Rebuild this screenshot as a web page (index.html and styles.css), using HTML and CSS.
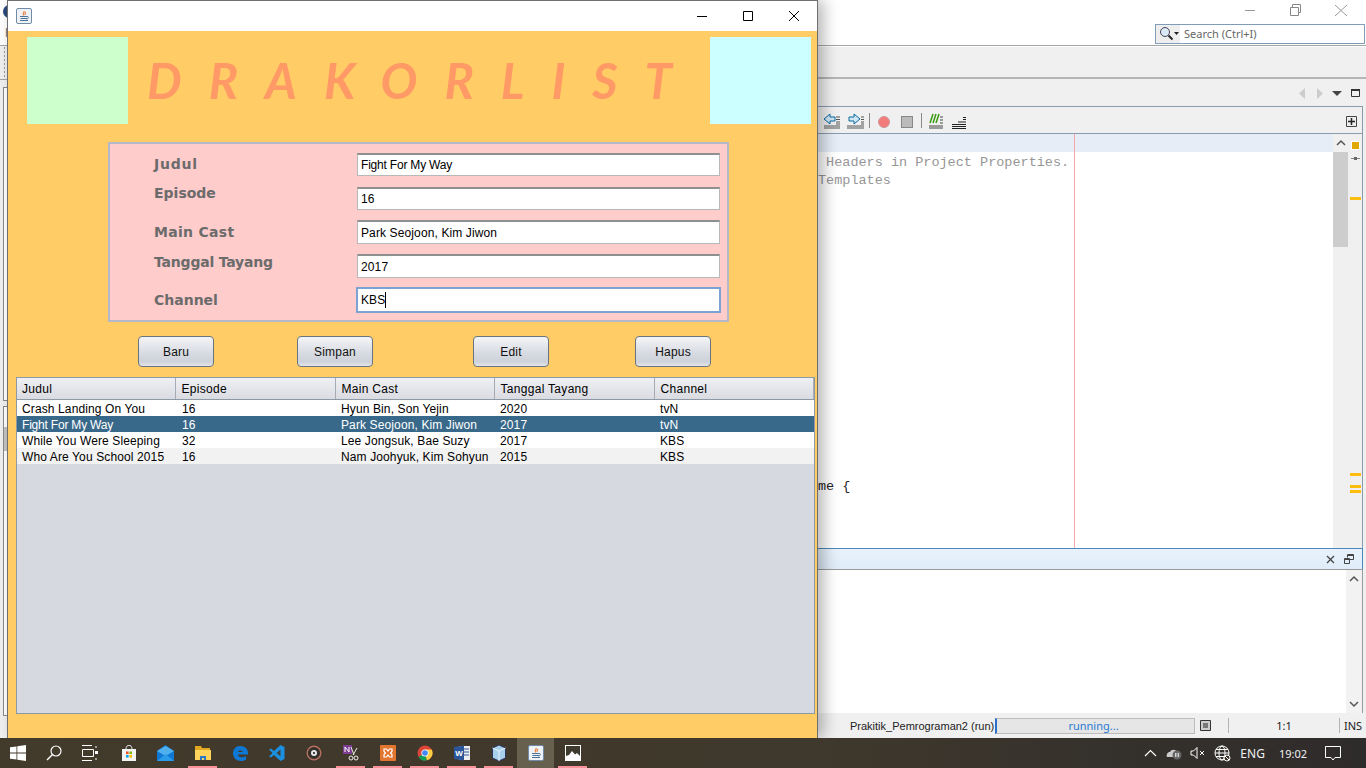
FILE: index.html
```html
<!DOCTYPE html>
<html lang="en">
<head>
  <meta charset="UTF-8">
  <title>Drakorlist</title>
  <link rel="stylesheet" href="styles.css">
</head>
<body>
  <!-- IDE window behind the app -->
  <div class="ide">
    <div class="ide-left">
      <div class="ide-left-top"><span class="ide-logo"></span><span class="ide-menu-f">F</span></div>
      <div class="ide-left-grip"></div>
      <div class="ide-left-body">
        <div class="side-panel panel-projects"></div>
        <div class="side-panel panel-nav"><div class="side-tab"></div></div>
      </div>
    </div>
    <div class="ide-main">
      <div class="ide-title">
        <div class="win-controls">
          <svg width="14" height="14" viewBox="0 0 14 14"><path d="M1 7.500h10" stroke="#999" fill="none"/></svg>
          <svg width="14" height="14" viewBox="0 0 14 14"><path d="M1.500 4.500h8v8h-8zM3.500 4.500v-3h8v8h-2" stroke="#888" fill="none"/></svg>
          <svg width="14" height="14" viewBox="0 0 14 14"><path d="M1 2l12 11M13 2L1 13" stroke="#999" fill="none"/></svg>
        </div>
      </div>
      <div class="ide-menu">
        <div class="search-box">
          <span class="search-icon">
            <svg width="20" height="16" viewBox="0 0 20 16"><circle cx="6" cy="6" r="4.500" fill="#dbe8f5" stroke="#445"/><path d="M9.500 9.500l4 4" stroke="#222" stroke-width="2"/><path d="M15 6h5l-2.500 3z" fill="#222"/></svg>
          </span>
          <span class="search-text">Search (Ctrl+I)</span>
        </div>
      </div>
      <div class="ide-toolbar"></div>
      <div class="ide-tabs">
        <svg width="64" height="14" viewBox="0 0 64 14"><path d="M7 2v11L1 7.500z" fill="#ccc"/><path d="M19 2v11l6-5.500z" fill="#ccc"/><path d="M34 5h10l-5 5z" fill="#444"/><path d="M53.500 3.500h8v7h-8z" fill="none" stroke="#333"/><path d="M53 4h9" stroke="#333" stroke-width="2"/></svg>
      </div>
      <div class="editor">
        <div class="editor-tools">
          <svg width="150" height="20" viewBox="0 0 150 20">
            <path d="M6 8l6-5v3h5v4h-5v3z" fill="#cfe6f5" stroke="#0a6aa1"/>
            <path d="M6 15h16M6 17h16M18 6h4M18 8.500h4M18 11h4M18 13h4" stroke="#555"/>
            <path d="M42 8l-6-5v3h-5v4h5v3z" fill="#cfe6f5" stroke="#0a6aa1"/>
            <path d="M29 15h17M29 17h17M43 6h3M43 8.500h3M43 11h3M43 13h3" stroke="#555"/>
            <path d="M51.500 2v15M103.500 2v15" stroke="#888"/>
            <circle cx="66" cy="11" r="5.500" fill="#f27c7c" stroke="#c99"/>
            <rect x="83.500" y="5.500" width="11" height="11" fill="#bbb" stroke="#888"/>
            <path d="M112 12l3-9M115 12l3-9M118 12l3-9" stroke="#3a9a10" stroke-width="1.500"/>
            <path d="M111 15h14M111 17h14M122 6h3M122 9h3M122 12h3" stroke="#444"/>
            <path d="M134 17.500h14M134 15.500h14M134 13.500h14M140 11h8M145 8.500h3M145 6.500h3" fill="none" stroke="#222"/>
          </svg>
          <svg class="split-icon" width="11" height="11" viewBox="0 0 11 11"><path d="M.5.500h10v10H.5z" fill="#eee" stroke="#444"/><path d="M5.500 2v7M2 5.500h7" stroke="#222" stroke-width="1.500"/></svg>
        </div>
        <div class="editor-body">
          <div class="line-hi"></div>
          <pre class="code-line code-comment"> Headers in Project Properties.</pre>
          <pre class="code-line code-comment">Templates</pre>
          <pre class="code-line code-class">me {</pre>
          <div class="margin-line"></div>
          <div class="scroll-strip">
            <div class="scroll-arrows"><svg width="10" height="8" viewBox="0 0 10 8"><path d="M1 6l4-4 4 4" fill="none" stroke="#555" stroke-width="1.500"/></svg></div>
            <div class="scroll-thumb"></div>
          </div>
          <div class="error-strip">
            <i class="mark-square"></i>
            <svg class="mark-caret" width="9" height="5" viewBox="0 0 9 5"><path d="M0 2.500h9" stroke="#888"/><path d="M3 1h3v3H3z" fill="#666"/></svg>
            <i class="mark m1"></i><i class="mark m2"></i><i class="mark m3"></i><i class="mark m4"></i>
          </div>
        </div>
      </div>
      <div class="output-head">
        <svg width="9" height="9" viewBox="0 0 9 9"><path d="M1 1l7 7M8 1L1 8" stroke="#444" stroke-width="1.300"/></svg>
        <svg width="10" height="10" viewBox="0 0 10 10"><path d="M.5 4.500h5v5h-5zM3.500 3.500v-3h6v5H6M.5 5.500h5M3.500 1.500h6" fill="none" stroke="#444"/></svg>
      </div>
      <div class="output-body">
        <div class="output-scroll">
          <svg width="10" height="8" viewBox="0 0 10 8"><path d="M1 6l4-4 4 4" fill="none" stroke="#555" stroke-width="1.500"/></svg>
          <svg width="10" height="8" viewBox="0 0 10 8"><path d="M1 2l4 4 4-4" fill="none" stroke="#555" stroke-width="1.500"/></svg>
        </div>
      </div>
      <div class="statusbar">
        <span class="run-name">Prakitik_Pemrograman2 (run)</span>
        <span class="run-bar">running...</span>
        <svg class="run-stop" width="11" height="11" viewBox="0 0 11 11"><path d="M.5.500h10v10H.5z" fill="#ccc" stroke="#333"/><path d="M3 3h5v5H3z" fill="#777"/></svg>
        <span class="status-pos">1:1</span>
        <span class="status-ins">INS</span>
      </div>
    </div>
  </div>

  <!-- Java Swing app window -->
  <div class="app-window">
    <div class="app-title">
      <svg class="java-icon" width="16" height="16" viewBox="0 0 16 16"><rect x=".5" y=".5" width="15" height="15" rx="1.500" fill="#eef2f7" stroke="#6f8ba8"/><path d="M8 3c1 1.500-2 2.500-.5 4.500M9.500 4c.5 1-1 2-.3 3" fill="none" stroke="#e8762b" stroke-width="1.100"/><path d="M4 8.500h7M4.500 10.500h6.500M4 12.500h8M11 8.500c2 0 2 2-.5 2.500" fill="none" stroke="#4a7299"/></svg>
      <div class="app-controls">
        <svg width="12" height="12" viewBox="0 0 12 12"><path d="M1 6.500h10" stroke="#000"/></svg>
        <svg width="12" height="12" viewBox="0 0 12 12"><path d="M1.500 1.500h9v9h-9z" fill="none" stroke="#000"/></svg>
        <svg width="12" height="12" viewBox="0 0 12 12"><path d="M1 1l10 10M11 1L1 11" stroke="#000"/></svg>
      </div>
    </div>
    <div class="app-body">
      <div class="banner">
        <div class="banner-box box-green"></div>
        <div class="banner-title">DRAKORLIST</div>
        <div class="banner-box box-cyan"></div>
      </div>
      <div class="form-panel">
        <div class="form-row row-judul">
          <label class="form-label">Judul</label>
          <div class="field">Fight For My Way</div>
        </div>
        <div class="form-row row-episode">
          <label class="form-label">Episode</label>
          <div class="field">16</div>
        </div>
        <div class="form-row row-cast">
          <label class="form-label">Main Cast</label>
          <div class="field">Park Seojoon, Kim Jiwon</div>
        </div>
        <div class="form-row row-tanggal">
          <label class="form-label">Tanggal Tayang</label>
          <div class="field">2017</div>
        </div>
        <div class="form-row row-channel">
          <label class="form-label">Channel</label>
          <div class="field field-focus">KBS<span class="caret"></span></div>
        </div>
      </div>
      <div class="buttons">
        <button class="btn btn-baru">Baru</button>
        <button class="btn btn-simpan">Simpan</button>
        <button class="btn btn-edit">Edit</button>
        <button class="btn btn-hapus">Hapus</button>
      </div>
      <div class="table-wrap">
        <table class="drama-table">
          <thead>
            <tr>
              <th class="col-judul">Judul</th>
              <th class="col-episode">Episode</th>
              <th class="col-cast">Main Cast</th>
              <th class="col-tanggal">Tanggal Tayang</th>
              <th class="col-channel">Channel</th>
            </tr>
          </thead>
          <tbody>
            <tr>
              <td>Crash Landing On You</td><td>16</td><td>Hyun Bin, Son Yejin</td><td>2020</td><td>tvN</td>
            </tr>
            <tr class="row-selected">
              <td class="cell-tight">Fight For My Way</td><td>16</td><td>Park Seojoon, Kim Jiwon</td><td>2017</td><td>tvN</td>
            </tr>
            <tr>
              <td>While You Were Sleeping</td><td>32</td><td>Lee Jongsuk, Bae Suzy</td><td>2017</td><td>KBS</td>
            </tr>
            <tr class="row-alt">
              <td>Who Are You School 2015</td><td>16</td><td>Nam Joohyuk, Kim Sohyun</td><td>2015</td><td>KBS</td>
            </tr>
          </tbody>
        </table>
      </div>
    </div>
  </div>

  <!-- Windows taskbar -->
  <div class="taskbar">
    <svg class="tb-start" width="16" height="16" viewBox="0 0 16 16"><path d="M0 2.300l6.500-.9v6.200H0zM7.300 1.300L16 0v7.600H7.300zM0 8.400h6.500v6.200L0 13.700zM7.300 8.400H16V16l-8.700-1.300z" fill="#fff"/></svg>
    <svg class="tb-search" width="16" height="16" viewBox="0 0 16 16"><circle cx="10" cy="6" r="5" fill="none" stroke="#fff" stroke-width="1.200"/><path d="M6.500 9.500L1 15" stroke="#fff" stroke-width="1.400"/></svg>
    <svg class="tb-task" width="17" height="16" viewBox="0 0 17 16"><path d="M1 .5h10M1 15.500h10M1.500 4.500h11v7h-11z" fill="none" stroke="#fff"/><path d="M15 1v2M15 13v2" stroke="#fff"/><rect x="14" y="6" width="3" height="3" fill="#fff"/></svg>
    <div class="tb-apps">
      <span class="tb-app"><svg width="16" height="16" viewBox="0 0 16 16"><path d="M1 4h14v12H1z" fill="#f4f4f4"/><path d="M5 4c0-5 6-5 6 0" fill="none" stroke="#eee"/><path d="M5 6.500h2.600v2.600H5z" fill="#f25022"/><path d="M8.400 6.500H11v2.600H8.400z" fill="#7fba00"/><path d="M5 10h2.600v2.600H5z" fill="#00a4ef"/><path d="M8.400 10H11v2.600H8.400z" fill="#ffb900"/></svg></span>
      <span class="tb-app"><svg width="17" height="16" viewBox="0 0 17 16"><path d="M0 6l8.500-6L17 6v10H0z" fill="#0f78d4"/><path d="M0 6l8.500 5L17 6 8.500 1z" fill="#50b0ee"/><path d="M0 16l8.500-7 8.500 7z" fill="#2a9be8"/></svg></span>
      <span class="tb-app tb-open"><svg width="16" height="16" viewBox="0 0 16 16"><path d="M0 1h6l1 2h8v3H0z" fill="#e0a820"/><path d="M0 5h16v10H0z" fill="#ffd35c"/><path d="M5 15v-4h6v4H9v-2H7v2z" fill="#2a78c8"/></svg></span>
      <span class="tb-app"><svg width="16" height="16" viewBox="0 0 16 16"><path d="M8 1C3.500 1 1 4.500 1 8.500 1 13 4.500 16 9 16c1.500 0 3-.3 5-1.200V11c-3 2-7.500 2-8-1.500h10V8c0-4-3-7-8-7zM6 7c.3-2 4.500-2 4.700 0z" fill="#0f78d4"/></svg></span>
      <span class="tb-app"><svg width="16" height="16" viewBox="0 0 16 16"><path d="M11.500 0L15.500 2v12l-4 2L5 10l-3 2.500L0 11.500 3.500 8 0 4.500 2 3.500 5 6z" fill="#1b8fe0"/><path d="M11.500 4.500L7.500 8l4 3.500z" fill="#444033"/></svg></span>
      <span class="tb-app"><svg width="16" height="16" viewBox="0 0 16 16"><circle cx="8" cy="8" r="6.800" fill="#332f2a" stroke="#b7705f" stroke-width="1.400"/><circle cx="8" cy="8" r="3" fill="#e8e8e8"/><circle cx="8" cy="8" r="1.100" fill="#222"/></svg></span>
      <span class="tb-app tb-open"><svg width="16" height="16" viewBox="0 0 16 16"><path d="M0 0h9v9H0z" fill="#7b3e93"/><path d="M2 7V2l4 5V2" fill="none" stroke="#fff"/><path d="M8 2l3 8M14 3l-4 7" stroke="#eee"/><circle cx="8" cy="13" r="2" fill="none" stroke="#eee"/><circle cx="13" cy="13" r="2" fill="none" stroke="#eee"/></svg></span>
      <span class="tb-app tb-open"><svg width="16" height="16" viewBox="0 0 16 16"><rect width="16" height="16" rx="1" fill="#e3762f"/><path d="M4 4h2.500L8 6l1.500-2H12v2.500L10.500 8 12 9.500V12H9.500L8 10l-1.500 2H4V9.500L5.500 8 4 6.500z" fill="none" stroke="#fff" stroke-width="1.200"/></svg></span>
      <span class="tb-app tb-open"><svg width="16" height="16" viewBox="0 0 16 16"><circle cx="8" cy="8" r="7.500" fill="#db4437"/><path d="M8 8L1.500 12A7.500 7.500 0 0 0 10 15.300z" fill="#0f9d58"/><path d="M8 4.500h6.700A7.500 7.500 0 0 1 10 15.300L8 8z" fill="#ffcd40"/><circle cx="8" cy="8" r="3.600" fill="#fff"/><circle cx="8" cy="8" r="2.800" fill="#4285f4"/></svg></span>
      <span class="tb-app tb-open"><svg width="16" height="16" viewBox="0 0 16 16"><path d="M5 1h11v14H5z" fill="#eee"/><path d="M10 4h5M10 7h5M10 10h5" stroke="#2b579a"/><path d="M0 2l10-1.500v15L0 14z" fill="#2b579a"/><text class="word-w" x="1.200" y="11">W</text></svg></span>
      <span class="tb-app tb-open"><svg width="16" height="16" viewBox="0 0 16 16"><path d="M8 0l6.500 3v10L8 16l-6.500-3V3z" fill="#a7d0ea" stroke="#2c3560"/><path d="M8 6l6.500-3M8 6L1.500 3M8 6v10" stroke="#e8f3fa" fill="none"/></svg></span>
      <span class="tb-app tb-active"><svg width="16" height="16" viewBox="0 0 16 16"><rect x=".5" y=".5" width="15" height="15" rx="1.500" fill="#eef2f7" stroke="#6f8ba8"/><path d="M8 3c1 1.500-2 2.500-.5 4.500M9.500 4c.5 1-1 2-.3 3" fill="none" stroke="#e8762b" stroke-width="1.100"/><path d="M4 8.500h7M4.500 10.500h6.500M4 12.500h8M11 8.500c2 0 2 2-.5 2.500" fill="none" stroke="#4a7299"/></svg></span>
      <span class="tb-app tb-open"><svg width="16" height="16" viewBox="0 0 16 16"><path d="M0 0h16v16H0z" fill="#fff"/><path d="M1 1h14v10l-3-3-2 1.500L7 6l-3 4-3 1z" fill="#3f3a2e"/></svg></span>
    </div>
    <div class="tray">
      <svg width="13" height="8" viewBox="0 0 13 8"><path d="M1 7l5.500-5.500L12 7" fill="none" stroke="#fff" stroke-width="1.200"/></svg>
      <svg class="tray-cloud" width="16" height="14" viewBox="0 0 16 14"><path d="M1 11c-1-3 1-5 3-5 1-3 6-3 7 0v5z" fill="#ccc"/><circle cx="11" cy="9" r="4.500" fill="#666"/><path d="M9.800 7v4M12.200 7v4" stroke="#fff"/></svg>
      <svg width="15" height="14" viewBox="0 0 15 14"><path d="M1 5h2.500L7 1.500v11L3.500 9H1z" fill="none" stroke="#fff"/><path d="M10 5l4 4M14 5l-4 4" stroke="#fff"/></svg>
      <svg width="17" height="17" viewBox="0 0 17 17"><circle cx="8" cy="8" r="7" fill="none" stroke="#fff"/><ellipse cx="8" cy="8" rx="3" ry="7" fill="none" stroke="#fff"/><path d="M1 8h14M2 4.500h12M2 11.500h12" stroke="#fff"/><circle cx="13" cy="13" r="3" fill="#3a3226" stroke="#fff"/><path d="M11 11l4 4" stroke="#fff"/></svg>
      <span class="tray-text tray-lang">ENG</span>
      <span class="tray-text tray-time">19:02</span>
      <svg class="tray-note" width="16" height="16" viewBox="0 0 16 16"><path d="M.5 1.500h15v11H10L8 15l-2-2.500H.5z" fill="none" stroke="#fff"/></svg>
    </div>
  </div>
</body>
</html>
```

FILE: styles.css
```css
* {
  box-sizing: border-box;
}

html, body {
  margin: 0;
  height: 768px;
  overflow: hidden;
}

body {
  font-family: "Liberation Sans", Arial, sans-serif;
  font-size: 12px;
  background-color: #f0f0f0;
  position: relative;
}

/* IDE behind */
.ide {
  display: flex;
  height: 738px;
  background: #f0f0f0;
}

.ide-left {
  width: 818px;
  flex: none;
  display: flex;
  flex-direction: column;
}

.ide-left-top {
  height: 46px;
  background: #fff;
  border-bottom: 1px solid #a5a5a5;
  padding: 27px 0 0 5px;
  position: relative;
  color: #777;
  line-height: 12px;
}

.ide-logo {
  position: absolute;
  top: 5px;
  left: 3px;
  width: 12px;
  height: 13px;
  border-radius: 50%;
  background: #2b4a7a;
}

.ide-left-grip {
  height: 34px;
  border-bottom: 1px solid #a5a5a5;
  background-color: #f0f0f0;
  background-image: radial-gradient(#999 1px, transparent 1px);
  background-size: 3px 4px;
  background-position: 3px 4px;
  background-repeat: repeat-y;
}

.ide-left-body {
  flex: 1;
  background: #f0f0f0;
  padding: 7px 0 0 3px;
  display: flex;
  flex-direction: column;
  gap: 5px;
}

.side-panel {
  border: 1px solid #8a8a8a;
  background: #fff;
  position: relative;
}

.panel-projects {
  height: 314px;
}

.panel-nav {
  height: 310px;
}

.side-tab {
  margin-top: 20px;
  height: 24px;
  background: #c4c4c4;
}

.ide-main {
  flex: 1;
  display: flex;
  flex-direction: column;
  min-width: 0;
  position: relative;
}

.ide-title {
  height: 15px;
  background: #fff;
  position: relative;
}

.win-controls {
  position: absolute;
  top: 3px;
  right: 18px;
  display: flex;
  gap: 31px;
}

.ide-menu {
  height: 31px;
  background: #fff;
  border-bottom: 1px solid #a5a5a5;
  display: flex;
  justify-content: flex-end;
  align-items: flex-start;
  padding-top: 9px;
  padding-right: 1px;
}

.search-box {
  width: 210px;
  height: 20px;
  border: 1px solid #7f9db9;
  background: #fff;
  display: flex;
  align-items: center;
}

.search-icon {
  width: 24px;
  height: 18px;
  background: #eee;
  display: flex;
  align-items: center;
  padding-left: 3px;
}

.search-text {
  font-family: "Noto Sans", sans-serif;
  font-size: 11px;
  color: #666;
  margin-left: 4px;
  padding-bottom: 2px;
}

.ide-toolbar {
  height: 33px;
  background: #f0f0f0;
  border-top: 1px solid #fff;
  border-bottom: 2px solid #b5b5b5;
}

.ide-tabs {
  height: 27px;
  display: flex;
  justify-content: flex-end;
  align-items: center;
  padding-right: 4px;
  background: #f0f0f0;
}

.editor {
  height: 442px;
  margin-right: 3px;
  border-top: 1px solid #8a9bb0;
  border-right: 1px solid #8a9bb0;
  display: flex;
  flex-direction: column;
}

.editor-tools {
  height: 27px;
  background: #f0f0f0;
  border-bottom: 1px solid #8a9bb0;
  display: flex;
  align-items: center;
  justify-content: space-between;
  padding-right: 5px;
  padding-top: 2px;
  flex: none;
}

.split-icon {
  flex: none;
}

.editor-body {
  flex: 1;
  background: #fff;
  position: relative;
  overflow: hidden;
  padding-top: 20px;
}

.line-hi {
  position: absolute;
  top: 0;
  left: 0;
  right: 29px;
  height: 18px;
  background: #e6edf7;
}

.code-line {
  margin: 0;
  height: 18px;
  line-height: 18px;
  font-family: "Liberation Mono", monospace;
  font-size: 13.500px;
  white-space: pre;
  position: relative;
}

.code-comment {
  color: #969696;
}

.code-class {
  color: #222;
  margin-top: 288px;
}

.margin-line {
  position: absolute;
  top: 0;
  bottom: 0;
  left: 256px;
  width: 1px;
  background: #f6a8a8;
}

.scroll-strip {
  position: absolute;
  top: 0;
  bottom: 0;
  right: 14px;
  width: 15px;
  background: #f0f0f0;
}

.scroll-arrows {
  height: 18px;
  padding-left: 3px;
  padding-top: 5px;
  display: flex;
}

.scroll-thumb {
  height: 95px;
  background: #cdcdcd;
}

.error-strip {
  position: absolute;
  top: 0;
  bottom: 0;
  right: 0;
  width: 14px;
  background: #f0f0f0;
}

.mark-square {
  position: absolute;
  top: 7px;
  left: 3px;
  width: 9px;
  height: 9px;
  background: #e0a800;
  border: 1px solid #fff;
}

.mark-caret {
  position: absolute;
  top: 22px;
  left: 3px;
}

.mark {
  position: absolute;
  left: 2px;
  width: 11px;
  height: 3px;
  background: #fdbd10;
}

.m1 { top: 63px; }
.m2 { top: 339px; }
.m3 { top: 351px; }
.m4 { top: 356px; }

.output-head {
  height: 22px;
  margin-right: 3px;
  background: linear-gradient(#e8f2fc, #dfecf9);
  border-top: 1px solid #4c88b8;
  border-bottom: 1px solid #9a9a9a;
  border-right: 1px solid #4c88b8;
  display: flex;
  justify-content: flex-end;
  align-items: center;
  gap: 9px;
  padding-right: 8px;
}

.output-body {
  flex: 1;
  margin-right: 3px;
  background: #fff;
  position: relative;
  border-right: 1px solid #9a9a9a;
}

.output-scroll {
  position: absolute;
  top: 0;
  bottom: 0;
  right: 0;
  width: 16px;
  background: #f2f2f2;
  display: flex;
  flex-direction: column;
  justify-content: space-between;
  align-items: center;
  padding: 5px 0;
}

.statusbar {
  height: 25px;
  flex: none;
  background: #f0f0f0;
  display: flex;
  align-items: center;
  font-family: "Noto Sans", sans-serif;
  font-size: 11px;
  color: #222;
  padding-left: 32px;
  position: relative;
}

.run-name {
  width: 145px;
  flex: none;
  font-family: "Liberation Sans", sans-serif;
  font-size: 11px;
  white-space: nowrap;
}

.run-bar {
  width: 200px;
  height: 16px;
  flex: none;
  background: #e6e6e6;
  border: 1px solid #bcbcbc;
  border-left: 2px solid #2a6fc9;
  color: #2a7ad2;
  text-align: center;
  line-height: 13px;
  padding-right: 4px;
}

.run-stop {
  margin-left: 5px;
  flex: none;
}

.status-pos {
  width: 111px;
  text-align: center;
  margin-left: 17px;
  border-left: 1px solid #b4b4b4;
  flex: none;
  line-height: 15px;
}

.status-ins {
  border-left: 1px solid #b4b4b4;
  padding-left: 4px;
  line-height: 15px;
}

/* app window */
.app-window {
  position: absolute;
  top: 0;
  left: 7px;
  width: 811px;
  height: 738px;
  border: 1px solid #6f6f6f;
  border-bottom: 0;
  box-shadow: 6px 0 14px rgba(0, 0, 0, 0.28);
  display: flex;
  flex-direction: column;
}

.app-title {
  height: 30px;
  flex: none;
  background: #fff;
  display: flex;
  align-items: center;
  justify-content: space-between;
  padding: 0 17px 0 8px;
}

.app-controls {
  display: flex;
  gap: 34px;
  align-items: center;
}

.app-body {
  flex: 1;
  background: #ffcc66;
  display: flex;
  flex-direction: column;
  padding-top: 6px;
}

.banner {
  height: 87px;
  flex: none;
  display: flex;
  padding: 0 6px 0 19px;
}

.banner-box {
  width: 101px;
  height: 87px;
  flex: none;
}

.box-green {
  background: #ccffcc;
}

.box-cyan {
  background: #ccffff;
}

.banner-title {
  flex: 1;
  font-family: "Lato", "Open Sans", sans-serif;
  font-style: italic;
  font-weight: bold;
  font-size: 49px;
  color: #ff9966;
  letter-spacing: 27px;
  padding-left: 19px;
  line-height: 87px;
  white-space: nowrap;
  overflow: hidden;
}

.form-panel {
  width: 621px;
  height: 180px;
  margin: 18px 0 0 100px;
  background: #ffcccc;
  border: 2px solid #b5b8c8;
  flex: none;
  position: relative;
}

.form-row {
  position: absolute;
  left: 0;
  right: 0;
  height: 24px;
}

.row-judul { top: 9px; }
.row-episode { top: 43px; }
.row-cast { top: 76px; }
.row-tanggal { top: 110px; }
.row-channel { top: 143px; height: 26px; }

.form-label {
  position: absolute;
  left: 44px;
  font-family: "DejaVu Sans", sans-serif;
  font-size: 14px;
  font-weight: bold;
  color: #6b6b6b;
  white-space: nowrap;
}

.row-judul .form-label { top: 3px; letter-spacing: .8px; }
.row-episode .form-label { top: -2px; }
.row-cast .form-label { top: 4px; letter-spacing: .3px; }
.row-tanggal .form-label { top: 0; letter-spacing: -.2px; }
.row-channel .form-label { top: 5px; }

.field {
  position: absolute;
  left: 247px;
  top: 0;
  width: 363px;
  height: 24px;
  background: #fff;
  border: 1px solid #b8b8b8;
  border-top: 2px solid #8f8f8f;
  font-size: 12px;
  letter-spacing: .12px;
  line-height: 22px;
  padding-left: 3px;
  color: #000;
}

.row-judul .field,
.row-episode .field {
  height: 23px;
  line-height: 20px;
}

.row-judul .field {
  letter-spacing: -.2px;
}

.field-focus {
  left: 246px;
  width: 365px;
  height: 26px;
  border: 2px solid #7ba4d4;
  line-height: 22px;
  padding-left: 3px;
}

.caret {
  display: inline-block;
  width: 1px;
  height: 16px;
  background: #000;
  vertical-align: -4px;
}

.buttons {
  position: relative;
  height: 31px;
  margin-top: 14px;
  flex: none;
}

.btn {
  position: absolute;
  top: 0;
  width: 76px;
  height: 31px;
  border: 1px solid #6a7480;
  border-radius: 4px;
  background: linear-gradient(#f4f5f7, #d8dbe2 55%, #cdd1d9 85%, #e4e6ea);
  font-family: "Liberation Sans", Arial, sans-serif;
  font-size: 12px;
  letter-spacing: .2px;
  color: #111;
  padding: 0;
}

.btn-baru { left: 130px; }
.btn-simpan { left: 289px; }
.btn-edit { left: 465px; }
.btn-hapus { left: 627px; }

.table-wrap {
  height: 337px;
  margin: 10px 2px 0 8px;
  background: #d6d9df;
  border: 1px solid #8e99a4;
  flex: none;
}

.drama-table {
  border-collapse: collapse;
  table-layout: fixed;
  width: 100%;
  font-size: 12px;
}

.drama-table th {
  height: 21px;
  background: linear-gradient(#eff0f3, #d9dbe2);
  border-right: 1px solid #a5acb5;
  border-bottom: 1px solid #8e99a4;
  font-weight: normal;
  text-align: left;
  padding: 1px 0 0 6px;
  letter-spacing: .3px;
  color: #000;
}

.drama-table th:first-child {
  padding-left: 5px;
}

.drama-table td {
  height: 16px;
  padding: 2px 0 0 6px;
  line-height: 14px;
  letter-spacing: .12px;
  white-space: nowrap;
  overflow: hidden;
  background: #fff;
  color: #000;
}

.drama-table td:first-child {
  padding-left: 5px;
}

.drama-table td:nth-child(2) {
  padding-left: 7px;
}

.col-judul { width: 158px; }
.col-episode { width: 160px; }
.col-cast { width: 159px; }
.col-tanggal { width: 160px; }

.drama-table .row-selected td {
  background: #39698a;
  color: #fff;
}

.drama-table .cell-tight {
  letter-spacing: -.2px;
}

.drama-table .row-alt td {
  background: #f2f2f2;
}

/* taskbar */
.taskbar {
  position: absolute;
  left: 0;
  right: 0;
  bottom: 0;
  height: 30px;
  background: linear-gradient(90deg, #423a2b, #3f382c 60%, #33302c 85%, #2e2b2b);
  display: flex;
  align-items: center;
}

.tb-start {
  margin-left: 10px;
  flex: none;
}

.tb-search {
  margin-left: 20px;
  flex: none;
}

.tb-task {
  margin-left: 19px;
  flex: none;
}

.tb-apps {
  display: flex;
  margin-left: 12px;
  height: 30px;
}

.tb-app {
  width: 37px;
  height: 30px;
  display: flex;
  align-items: center;
  justify-content: center;
  position: relative;
}

.tb-open::after {
  content: '';
  position: absolute;
  left: 4px;
  right: 4px;
  bottom: 0;
  height: 2px;
  background: #f9929b;
}

.tb-active {
  background: #67604f;
}

.word-w {
  font-family: "Liberation Sans", sans-serif;
  font-size: 8px;
  font-weight: bold;
  fill: #fff;
}

.tray {
  margin-left: auto;
  display: flex;
  align-items: center;
  color: #fff;
  padding-right: 25px;
}

.tray svg {
  flex: none;
  margin-right: 9px;
}

.tray .tray-cloud {
  margin-right: 8px;
}

.tray-text {
  font-family: "Noto Sans", sans-serif;
  font-size: 12px;
  color: #f2f2f2;
}

.tray-lang {
  margin-right: 14px;
}

.tray-time {
  font-size: 11px;
  margin-right: 18px;
}

.tray .tray-note {
  margin-right: 0;
}
```
